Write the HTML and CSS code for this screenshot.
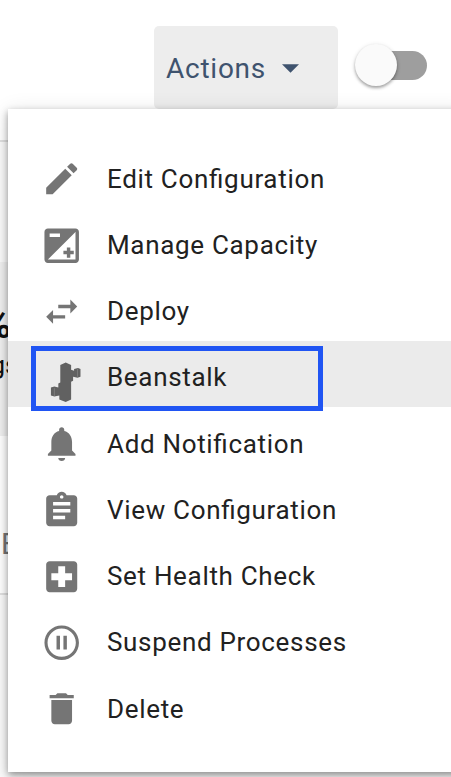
FILE: index.html
```html
<!DOCTYPE html>
<html lang="en">
<head>
<meta charset="utf-8">
<title>Actions</title>
<link rel="stylesheet" href="styles.css">
</head>
<body>
<div class="page">
  <header class="toolbar">
    <button class="actions">Actions<svg class="caret" viewBox="0 0 18 9"><path d="M0 0h18L9 9z"/></svg></button>
    <div class="switch"><span class="knob"></span></div>
  </header>
  <section class="spacer"></section>
  <section class="stats"><div class="percent">%</div><div class="unit">gs</div></section>
  <section class="tabs">E</section>
  <section class="rest"></section>
</div>
<nav class="menu">
  <a class="item"><svg class="icon" viewBox="0 0 24 24"><path d="M3 17.25V21h3.75L17.81 9.94l-3.75-3.75L3 17.25zM20.71 7.04c.39-.39.39-1.02 0-1.41l-2.34-2.34c-.39-.39-1.02-.39-1.41 0l-1.83 1.83 3.75 3.75 1.83-1.83z"/></svg><span>Edit Configuration</span></a>
  <a class="item"><svg class="icon" viewBox="0 0 24 24"><path d="M15 17v2h2v-2h2v-2h-2v-2h-2v2h-2v2h2zm5-15H4c-1.1 0-2 .9-2 2v16c0 1.1.9 2 2 2h16c1.1 0 2-.9 2-2V4c0-1.1-.9-2-2-2zM5 5h6v2H5V5zm15 15H4L20 4v16z"/></svg><span>Manage Capacity</span></a>
  <a class="item"><svg class="icon" viewBox="0 0 24 24"><path d="M6.99 11L3 15l3.99 4v-3H14v-2H6.99v-3zM21 9l-3.99-4v3H10v2h7.01v3L21 9z"/></svg><span>Deploy</span></a>
  <a class="item active"><svg class="icon bean" viewBox="0 0 42 42"><path d="M15 4l5.500-2.500L26 4v5l3 1v-2l4-1 2.500 1v8l-3 1-4.500-1v4l-2 1v18l-5.500 2.500L14 39v-4l-5 1-3.500-1v-8l3.500-1 4 .8v-4l2-1z"/><path class="seam" d="M32.500 8v8M9 27.500v8"/></svg><span>Beanstalk</span></a>
  <a class="item"><svg class="icon" viewBox="0 0 24 24"><path d="M12 22c1.100 0 2-.6 2-1.700h-4c0 1.100.89 1.700 2 1.700zm6-6v-5c0-3.070-1.640-5.640-4.500-6.320V4c0-.83-.67-1.500-1.500-1.500s-1.500.67-1.500 1.500v.68C7.630 5.360 6 7.920 6 11v5l-2 2v1h16v-1l-2-2z"/></svg><span>Add Notification</span></a>
  <a class="item"><svg class="icon" viewBox="0 0 24 24"><path d="M19 3h-4.180C14.400 1.840 13.300 1 12 1c-1.300 0-2.400.84-2.820 2H5c-1.100 0-2 .9-2 2v14c0 1.100.9 2 2 2h14c1.100 0 2-.9 2-2V5c0-1.100-.9-2-2-2zm-7 0c.55 0 1 .45 1 1s-.45 1-1 1-1-.45-1-1 .45-1 1-1zm2 14H7v-2h7v2zm3-4H7v-2h10v2zm0-4H7V7h10v2z"/></svg><span>View Configuration</span></a>
  <a class="item"><svg class="icon" viewBox="0 0 24 24"><path d="M19 3H5c-1.100 0-2 .9-2 2v14c0 1.100.9 2 2 2h14c1.100 0 2-.9 2-2V5c0-1.100-.9-2-2-2zm-1 11h-4v4h-4v-4H6v-4h4V6h4v4h4v4z"/></svg><span>Set Health Check</span></a>
  <a class="item"><svg class="icon" viewBox="0 0 24 24"><path d="M9 16h2V8H9v8zm3-14C6.480 2 2 6.480 2 12s4.480 10 10 10 10-4.480 10-10S17.520 2 12 2zm0 18.200c-4.500 0-8.200-3.700-8.200-8.200s3.700-8.200 8.200-8.200 8.200 3.700 8.200 8.200-3.700 8.200-8.200 8.200zm1-4.200h2V8h-2v8z"/></svg><span>Suspend Processes</span></a>
  <a class="item"><svg class="icon" viewBox="0 0 24 24"><path d="M6 19c0 1.100.9 2 2 2h8c1.100 0 2-.9 2-2V7H6v12zM19 4h-3.500l-1-1h-5l-1 1H5v2h14V4z"/></svg><span>Delete</span></a>
</nav>
<div class="highlight"></div>
</body>
</html>
```

FILE: styles.css
```css
* { box-sizing: border-box; }
body {
  margin: 0;
  height: 777px;
  overflow: hidden;
  position: relative;
  background: #fff;
  font-family: Roboto, sans-serif;
}
.page { height: 777px; display: flex; flex-direction: column; overflow: hidden; }
.toolbar {
  flex: none;
  height: 142px;
  padding: 26px 24px 0 154px;
  display: flex;
  justify-content: space-between;
  align-items: flex-start;
  border-bottom: 2px solid #e0e0e0;
}
.actions {
  display: flex;
  align-items: center;
  gap: 16px;
  width: 184px;
  height: 83px;
  padding: 2px 0 0 12px;
  border: 0;
  border-radius: 5px;
  background: #ededed;
  color: #3f536e;
  font: 28px Roboto, sans-serif;
  letter-spacing: .75px;
}
.caret { width: 17px; height: 9px; fill: currentColor; }
.switch {
  width: 66px;
  height: 29px;
  margin-top: 25px;
  border-radius: 15px;
  background: #9e9e9e;
}
.knob {
  display: block;
  width: 42px;
  height: 42px;
  margin: -7px 0 0 -6px;
  border-radius: 50%;
  background: #fafafa;
  box-shadow: 0 2px 3px rgba(0,0,0,.3), 0 1px 5px rgba(0,0,0,.12);
}
.spacer { flex: none; height: 120px; background: #fafafa; }
.stats { flex: none; height: 174px; padding-top: 42px; background: #f0f0f0; color: #111; }
.percent { margin-left: -18px; font-size: 40px; line-height: 42px; font-weight: 700; }
.unit { margin-left: -9.500px; margin-top: 4px; font-size: 26px; line-height: 30px; }
.tabs {
  flex: none;
  height: 159px;
  padding: 91px 0 0 1px;
  border-bottom: 2px solid #e0e0e0;
  font-size: 29px;
  line-height: 34px;
  color: #757575;
}
.rest { flex: 1; background: #fafafa; }
.menu {
  position: absolute;
  left: 8px;
  top: 109px;
  width: 460px;
  height: 662.500px;
  padding-top: 33px;
  background: #fff;
  box-shadow: 0 3px 7px rgba(0,0,0,.38), 0 3px 20px rgba(0,0,0,.12);
}
.item {
  display: flex;
  align-items: center;
  gap: 24.600px;
  height: 66.250px;
  padding: 8px 0 0 33px;
  font-size: 26px;
  letter-spacing: .68px;
  font-feature-settings: "liga" 1;
  color: #212121;
}
.item span { margin-top: -1px; }
.item.active { background: #ebebeb; }
.icon { flex: none; width: 41.400px; height: 41.400px; fill: #757575; }
.bean { fill: #616161; transform: translate(4.500px, 4px); }
.seam { fill: none; stroke: #7b7b7b; stroke-width: 1; }
.highlight {
  position: absolute;
  left: 31px;
  top: 346px;
  width: 292px;
  height: 65px;
  border: 5px solid #2055f3;
}
```
